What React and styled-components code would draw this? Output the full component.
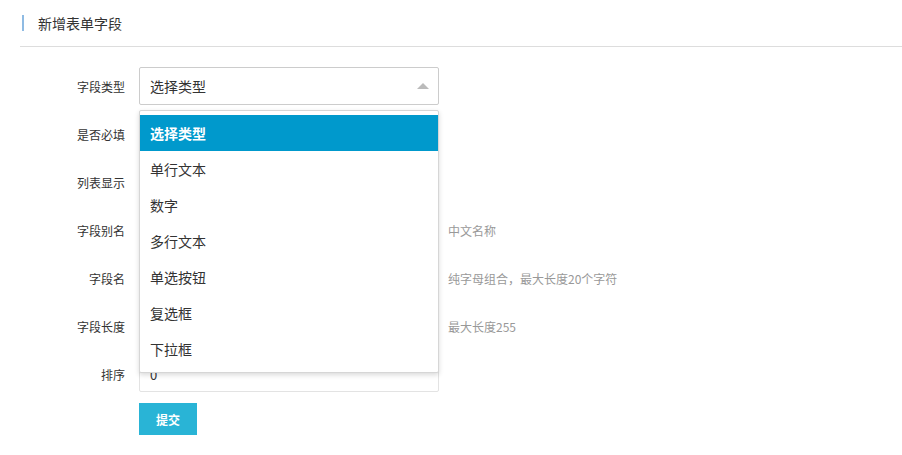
import React from 'react'
import styled, { createGlobalStyle } from 'styled-components'

const Global = createGlobalStyle`
	body {
		margin: 0;
		background: #fff;
		font-family: "Noto Sans CJK SC", "Liberation Sans", sans-serif;
		color: #333;
	}
`

const Header = styled.div`
	padding: 15px 0 0 20px;
`
const Title = styled.div`
	border-left: 2px solid #8fbbe3;
	margin-left: 2px;
	padding-left: 14px;
	height: 16px;
	line-height: 16px;
	font-size: 14px;
	color: #333;
`
const Divider = styled.div`
	height: 1px;
	background: #ddd;
	margin-top: 15px;
`

const Form = styled.div`
	display: flex;
	flex-direction: column;
	gap: 10px;
	padding: 20px 0 0 20px;
`
const Row = styled.div`
	display: flex;
	align-items: center;
	gap: 14px;
	height: 38px;
	position: relative;
`
const Label = styled.label`
	width: 105px;
	text-align: right;
	font-size: 12px;
	color: #333;
`
const Field = styled.div`
	position: relative;
	width: 300px;
	height: ${(p) => (p.tall ? 38 : 36)}px;
	box-sizing: border-box;
	border: 1px solid ${(p) => (p.tall ? '#ccc' : '#e3e3e3')};
	border-radius: 2px;
	display: flex;
	align-items: center;
	padding-left: 10px;
	font-size: ${(p) => (p.tall ? 14 : 13)}px;
	color: #333;
`
const Arrow = styled.span`
	position: absolute;
	right: 9px;
	top: 15px;
	width: 0;
	height: 0;
	border-left: 6px solid transparent;
	border-right: 6px solid transparent;
	border-bottom: 6px solid #bbb;
`
const Hint = styled.span`
	font-size: 12px;
	color: #999;
	margin-left: -5px;
`
const Menu = styled.ul`
	position: absolute;
	left: -1px;
	top: 42px;
	width: 300px;
	box-sizing: border-box;
	margin: 0;
	padding: 4px 0 5px;
	list-style: none;
	background: #fff;
	border: 1px solid #d6d6d6;
	border-radius: 2px;
	box-shadow: 0 2px 5px rgba(0, 0, 0, 0.15);
	z-index: 10;
`
const Item = styled.li`
	height: 36px;
	line-height: 36px;
	padding-left: 10px;
	font-size: 14px;
	color: ${(p) => (p.active ? '#fff' : '#333')};
	background: ${(p) => (p.active ? '#0099cc' : 'transparent')};
	font-weight: ${(p) => (p.active ? 700 : 400)};
`
const Button = styled.button`
	margin-left: 119px;
	width: 58px;
	height: 32px;
	border: none;
	background: #29b4d6;
	color: #fff;
	font-size: 12px;
	font-weight: 700;
	font-family: inherit;
`

const options = ['选择类型', '单行文本', '数字', '多行文本', '单选按钮', '复选框', '下拉框']

const App = () => {
	return (
		<>
			<Global />
			<Header>
				<Title>新增表单字段</Title>
				<Divider />
			</Header>
			<Form>
				<Row>
					<Label>字段类型</Label>
					<Field tall>
						选择类型
						<Arrow />
						<Menu>
							{options.map((o, i) => (
								<Item key={o} active={i === 0}>
									{o}
								</Item>
							))}
						</Menu>
					</Field>
				</Row>
				<Row>
					<Label>是否必填</Label>
				</Row>
				<Row>
					<Label>列表显示</Label>
				</Row>
				<Row>
					<Label>字段别名</Label>
					<Field />
					<Hint>中文名称</Hint>
				</Row>
				<Row>
					<Label>字段名</Label>
					<Field />
					<Hint>纯字母组合，最大长度20个字符</Hint>
				</Row>
				<Row>
					<Label>字段长度</Label>
					<Field />
					<Hint>最大长度255</Hint>
				</Row>
				<Row>
					<Label>排序</Label>
					<Field>0</Field>
				</Row>
				<Button>提交</Button>
			</Form>
		</>
	)
}

export default App
